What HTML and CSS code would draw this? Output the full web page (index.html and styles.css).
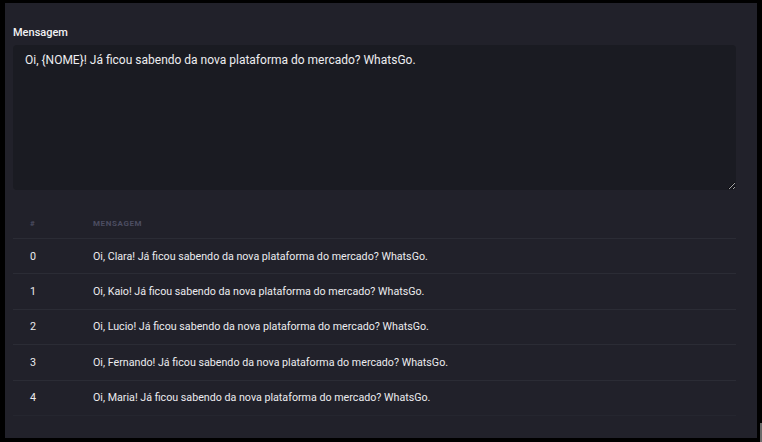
FILE: index.html
```html
<!DOCTYPE html>
<html lang="pt">
<head>
<meta charset="utf-8">
<link rel="stylesheet" href="styles.css">
</head>
<body>
<div class="panel">
  <label class="label" for="msg">Mensagem</label>
  <textarea id="msg" class="input">Oi, {NOME}! Já ficou sabendo da nova plataforma do mercado? WhatsGo.</textarea>
  <table class="table">
    <thead>
      <tr><th class="c-idx">#</th><th>Mensagem</th></tr>
    </thead>
    <tbody>
      <tr><td class="c-idx">0</td><td>Oi, Clara! Já ficou sabendo da nova plataforma do mercado? WhatsGo.</td></tr>
      <tr><td class="c-idx">1</td><td>Oi, Kaio! Já ficou sabendo da nova plataforma do mercado? WhatsGo.</td></tr>
      <tr><td class="c-idx">2</td><td>Oi, Lucio! Já ficou sabendo da nova plataforma do mercado? WhatsGo.</td></tr>
      <tr><td class="c-idx">3</td><td>Oi, Fernando! Já ficou sabendo da nova plataforma do mercado? WhatsGo.</td></tr>
      <tr><td class="c-idx">4</td><td>Oi, Maria! Já ficou sabendo da nova plataforma do mercado? WhatsGo.</td></tr>
    </tbody>
  </table>
</div>
<div class="edge"></div>
</body>
</html>
```

FILE: styles.css
```css
html, body {
  margin: 0;
  padding: 0;
  background: #000;
  height: 442px;
  overflow: hidden;
}
body {
  font-family: Roboto, "Liberation Sans", sans-serif;
  position: relative;
}
.panel {
  margin: 3px 0 0 5px;
  width: 752px;
  height: 435px;
  box-sizing: border-box;
  background: #21212a;
  padding: 23px 21px 0 8px;
  display: flex;
  flex-direction: column;
}
.label {
  color: #f2f2f4;
  font-size: 11px;
  font-weight: 500;
  line-height: 14px;
  margin-bottom: 5px;
}
.input {
  display: block;
  width: 100%;
  height: 145px;
  box-sizing: border-box;
  background: #1a1b22;
  border: 0;
  border-radius: 4px;
  color: #ededf0;
  font-family: Roboto, "Liberation Sans", sans-serif;
  font-size: 12px;
  line-height: 16px;
  padding: 7px 12px;
  resize: vertical;
  outline: none;
  margin: 0;
}
.table {
  margin-top: 18px;
  width: 100%;
  border-collapse: collapse;
}
.table th {
  text-align: left;
  font-size: 8px;
  font-weight: 700;
  letter-spacing: 0.6px;
  text-transform: uppercase;
  color: #4c4d61;
  height: 30px;
  padding: 0 0 0 17px;
  border-bottom: 1px solid #2b2c35;
}
.table td {
  font-size: 10.7px;
  color: #ececef;
  height: 34.4px;
  padding: 0 0 0 17px;
  border-bottom: 1px solid #2b2c35;
}
.table tbody tr:last-child td {
  border-bottom-color: #25262f;
}
.c-idx {
  width: 46px;
}
.edge {
  position: absolute;
  right: 0;
  top: 423px;
  width: 2px;
  height: 19px;
  background: #6a6a6a;
}
```
